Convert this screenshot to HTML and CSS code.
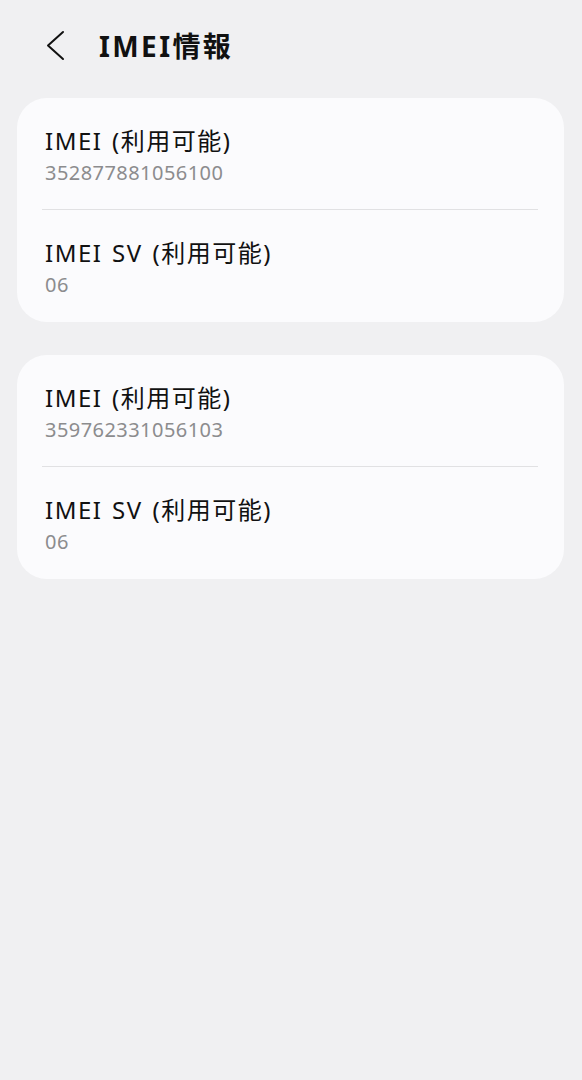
FILE: index.html
```html
<!DOCTYPE html>
<html lang="ja">
<head>
    <meta charset="UTF-8">
    <meta name="viewport" content="width=device-width, initial-scale=1.0">
    <title>IMEI情報</title>
    <link rel="stylesheet" href="styles.css">
</head>
<body>
    <header class="top-bar">
        <button class="back-btn" aria-label="戻る">
            <svg width="20" height="32" viewBox="0 0 20 32">
                <path d="M17 2 L2 15.5 L17 29" fill="none" stroke="#111" stroke-width="2" stroke-linecap="round" stroke-linejoin="round"/>
            </svg>
        </button>
        <h1 class="page-title">IMEI情報</h1>
    </header>

    <main class="content">
        <!-- SIM 1 -->
        <section class="card">
            <div class="row">
                <div class="row-title">IMEI (利用可能)</div>
                <div class="row-value">352877881056100</div>
            </div>
            <div class="divider"></div>
            <div class="row">
                <div class="row-title">IMEI SV (利用可能)</div>
                <div class="row-value">06</div>
            </div>
        </section>

        <!-- SIM 2 -->
        <section class="card">
            <div class="row">
                <div class="row-title">IMEI (利用可能)</div>
                <div class="row-value">359762331056103</div>
            </div>
            <div class="divider"></div>
            <div class="row">
                <div class="row-title">IMEI SV (利用可能)</div>
                <div class="row-value">06</div>
            </div>
        </section>
    </main>
</body>
</html>
```

FILE: styles.css
```css
* {
    margin: 0;
    padding: 0;
    box-sizing: border-box;
    font-family: 'Noto Sans', 'Noto Sans CJK JP', sans-serif;
}

body {
    min-height: 100vh;
    background: #f0f0f2;
    color: #111;
}

.top-bar {
    display: flex;
    align-items: center;
    height: 92px;
    padding-left: 46px;
}

.back-btn {
    display: flex;
    align-items: center;
    background: none;
    border: none;
    width: 20px;
    height: 32px;
    margin-right: 33px;
    cursor: pointer;
}

.page-title {
    font-size: 28px;
    font-weight: 700;
    letter-spacing: 2.4px;
    color: #111;
    line-height: 40px;
}

.content {
    display: flex;
    flex-direction: column;
    gap: 33px;
    padding: 6px 18px 0 17px;
}

.card {
    background: #fbfbfd;
    border-radius: 30px;
}

.row {
    padding: 28px 28px 23px;
}

.row:last-child {
    padding-bottom: 24px;
}

.row-title {
    font-size: 24px;
    line-height: 30px;
    letter-spacing: 1.5px;
    word-spacing: 2px;
    color: #111;
}

.row-value {
    margin-top: 4px;
    font-size: 20px;
    line-height: 26px;
    letter-spacing: 0.45px;
    color: #8c8c8e;
}

.divider {
    height: 1px;
    margin: 0 26px 0 25px;
    background: #e1e1e3;
}
```
